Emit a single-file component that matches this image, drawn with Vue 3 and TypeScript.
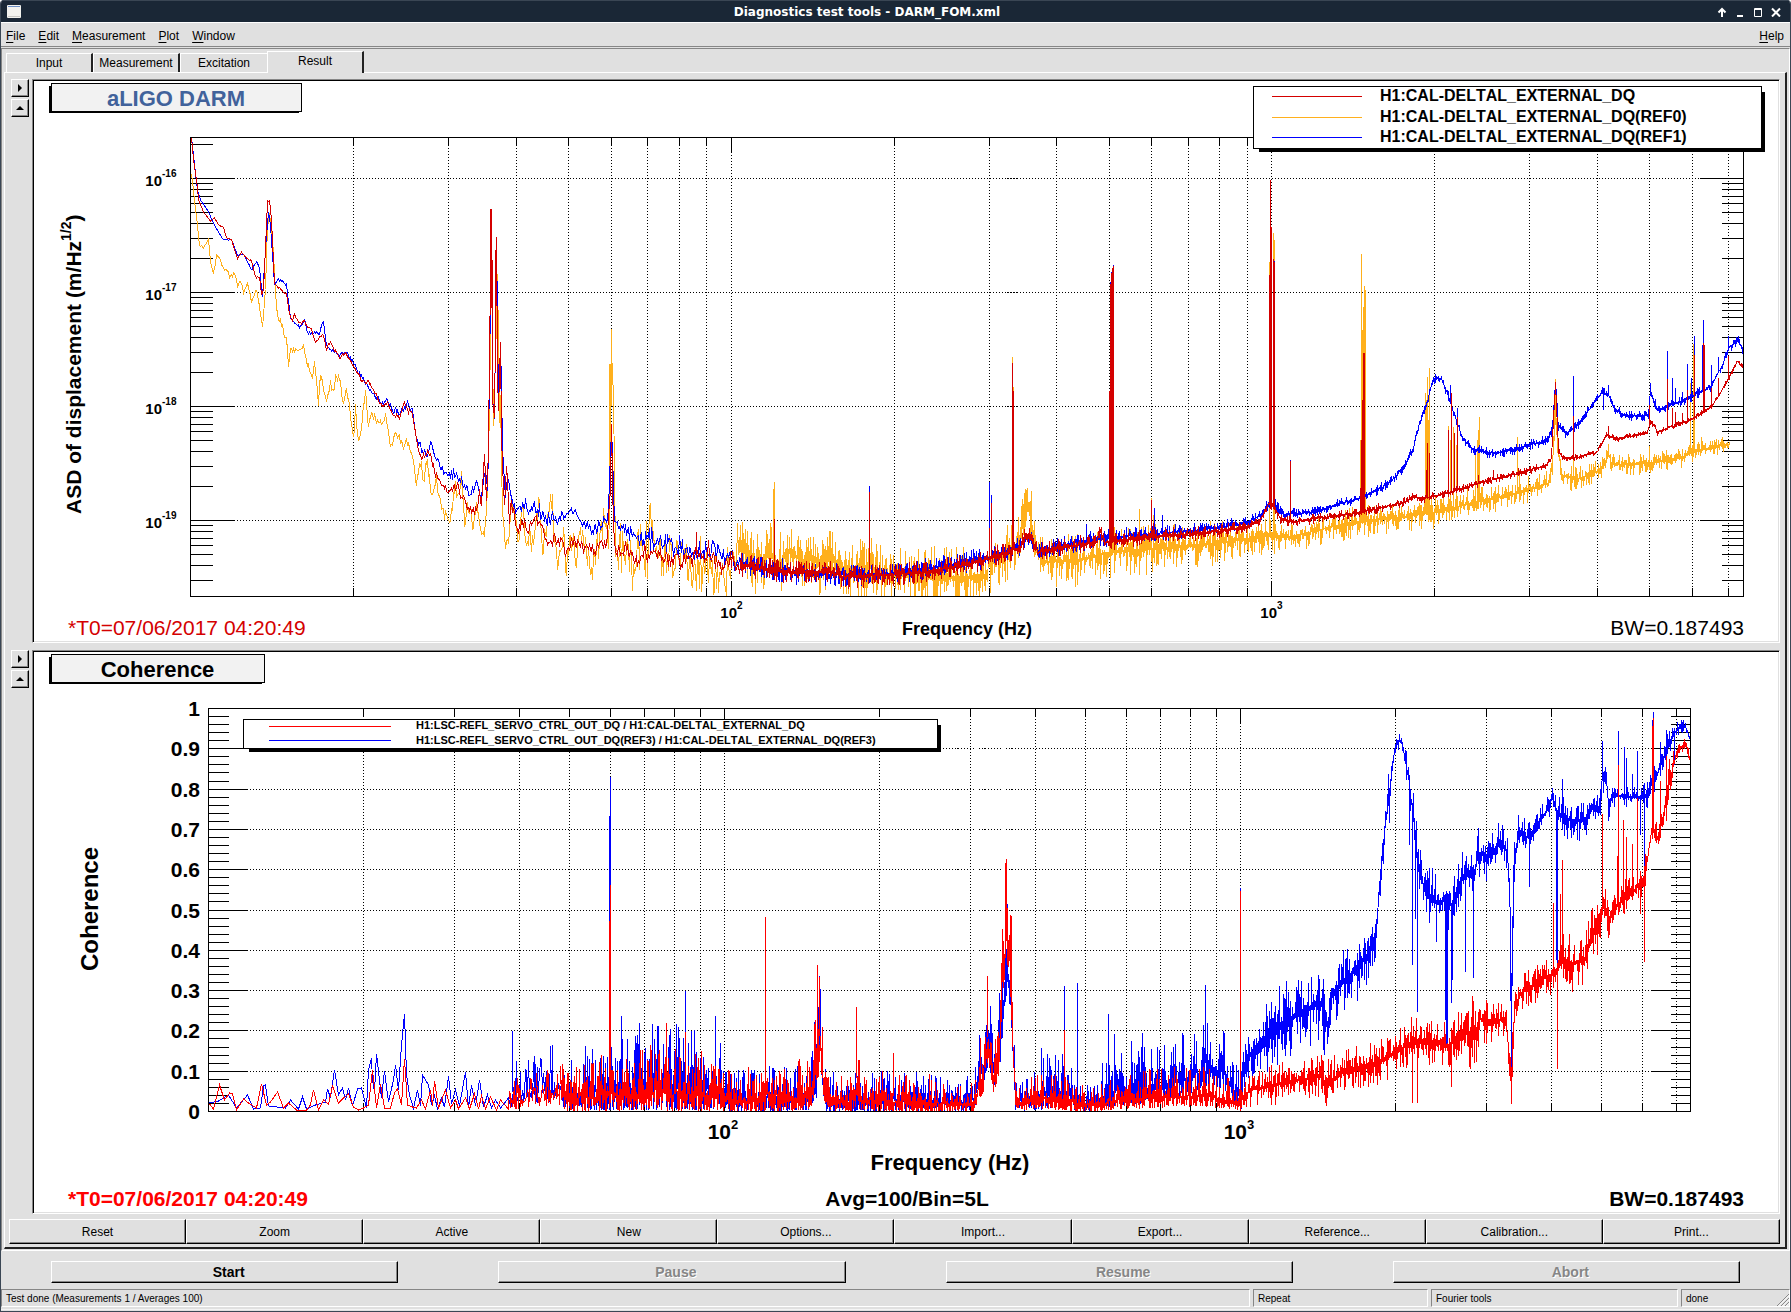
<script setup lang="ts">
type Knot = number[]

interface Axis { text: string; exp?: string; x: number; y: number; anchor: string }
interface Plot {
  id: string
  origin: number
  title: string
  titleWidth: number
  titleColor: string
  frame: { l: number; t: number; r: number; b: number }
  grid: string
  ticks: string
  traces: { color: string; d: string }[]
  labels: Axis[]
  labelClass: string
  small: number
  expRise: number
  legend: { x: number; y: number; w: number; h: number; x1: number; x2: number; tx: number; cls: string; rows: { color: string; text: string; ly: number; ty: number }[] }
}

const RED = '#d40000'
const ORANGE = '#ffb01c'
const BLUE = '#0000ff'

const parse = (s: string): Knot[] => s.trim().split(/\s+/).map(p => p.split(',').map(Number))

function random(seed: number) {
  let a = seed
  return () => {
    a = (a + 0x6d2b79f5) | 0
    let t = Math.imul(a ^ (a >>> 15), 1 | a)
    t = (t + Math.imul(t ^ (t >>> 7), 61 | t)) ^ t
    return ((t ^ (t >>> 14)) >>> 0) / 4294967296
  }
}

function at(k: Knot[], x: number, i = 1): number {
  if (x <= k[0][0]) return k[0][i]
  for (let n = 1; n < k.length; n++) {
    if (x <= k[n][0]) {
      const f = (x - k[n - 1][0]) / (k[n][0] - k[n - 1][0])
      return k[n - 1][i] + (k[n][i] - k[n - 1][i]) * f
    }
  }
  return k[k.length - 1][i]
}

const spikePath = (spikes: Knot[], base: (x: number) => number) =>
  spikes.map(([x, y]) => `M${Math.floor(x) + 0.5},${y}V${base(x).toFixed(0)}`).join('')

/* Spectrum: a mean curve with symmetric noise, plus narrow lines */
function spectrum(curve: string, noise: string, spikes: string, seed: number) {
  const c = parse(curve)
  const n = parse(noise)
  const rnd = random(seed)
  const pts: string[] = []
  const end = c[c.length - 1][0]
  const put = (x: number, y: number) => pts.push(`${x + 0.5},${Math.min(596, Math.max(137, y)).toFixed(1)}`)
  for (let x = c[0][0]; x <= end; x++) {
    const a = at(n, x)
    const y = at(c, x)
    if (x < 620) put(x, y + (rnd() + rnd() - 1) * a)
    else if (x < 740) put(x, y + (rnd() + rnd() - 1) * a * 1.7)
    else {
      const p = rnd()
      const q = rnd()
      put(x, y - a * (0.05 + p * p * 1.35))
      put(x, y + a * (0.05 + q * q * 1.35))
    }
  }
  return 'M' + pts.join('L') + spikePath(parse(spikes), x => at(c, x))
}

/* Coherence: sparse curve first, then columns between a low and a high envelope */
function coherence(curve: string, envelope: string, spikes: string, seed: number) {
  const c = parse(curve)
  const e = parse(envelope)
  const rnd = random(seed)
  const pts = c.map(([x, y]) => `${x + 0.5},${y}`)
  const put = (x: number, y: number) => pts.push(`${x + 0.5},${Math.min(1111, y).toFixed(1)}`)
  for (let x = c[c.length - 1][0] + 1; x <= 1690; x++) {
    const lo = at(e, x)
    const span = lo - at(e, x, 2)
    const p = rnd()
    const q = rnd()
    if (x < 1240) {
      put(x, lo - span * (0.3 + p * p * 1.1))
      if (x > 560 || q > 0.5) put(x, lo - span * 0.45 * q * q + 2)
    } else {
      put(x, lo - span * (0.55 + p * p * 0.95))
      put(x, lo - span * (0.45 - q * q * 0.95))
    }
  }
  return 'M' + pts.join('L') + spikePath(parse(spikes), x => (at(e, x) + at(e, x, 2)) / 2)
}

const asdRed = spectrum(
  `191,137 193,160 197,187 198,200 203,212 210,221 214,218 218,225 223,227 226,238 231,239 234,250 237,259 241,252 246,258 251,261 255,277 259,277 261,295 263,290 265,247 267,202 269,201 271,220 274,283 277,287 282,291 286,295 289,313 292,322 294,314 298,322 304,322 308,328 311,330 315,342 323,335 326,349 330,342 339,358 346,353 353,367 362,382 367,381 374,393 381,407 387,402 392,415 399,417 404,405 412,415 416,443 421,458 430,453 434,472 440,482 448,493 456,487 462,498 468,509 476,512 479,493 481,510 484,452 486,503 488,453 489,353 491,209 492,400 494,417 496,235 497,380 498,410 500,340 501,437 504,510 506,467 509,520 511,503 517,532 524,520 528,533 534,517 540,520 546,542 559,540 566,550 574,540 582,550 591,550 600,545 606,547 608,517 610,487 611,430 613,527 615,550 627,550 638,558 650,550 669,560 696,558 711,553 722,565 742,565 768,570 791,572 830,572 845,577 887,575 925,572 964,565 990,558 1013,550 1020,548 1026,533 1038,552 1059,548 1097,542 1100,530 1104,543 1136,538 1200,533 1245,528 1260,520 1269,502 1275,510 1281,520 1294,522 1317,518 1359,513 1371,510 1405,502 1413,496 1421,499 1451,492 1478,483 1520,473 1547,465 1551,457 1555,383 1558,450 1562,458 1574,458 1597,452 1606,435 1616,439 1646,433 1650,423 1654,425 1657,433 1669,427 1685,422 1702,413 1710,407 1717,398 1729,377 1737,361 1743,368`,
  '191,0 300,2 400,4 500,8 600,10 620,7 760,9 960,8 1240,5 1300,4 1743,2',
  `490,209 491,211 492,260 495,250 496,235 611,428 696,532 774,519 869,492 989,528 991,503 1012,363 1013,391 1109,391 1110,284 1111,273 1112,268 1113,266 1151,500 1153,523 1269,275 1270,180 1271,227 1273,259 1274,262 1290,461 1360,488 1361,440 1362,400 1363,353 1364,353 1426,470 1427,443 1429,453 1448,430 1451,393 1454,433 1457,417 1478,475 1493,470 1518,468 1573,416 1608,426 1649,405 1667,379 1672,408 1675,412 1682,413 1687,390 1694,355 1703,343 1704,345 1711,388 1718,378 1728,356`, 11)

const asdBlue = spectrum(
  `191,137 194,165 197,190 200,200 207,210 214,225 222,239 231,240 237,255 243,254 251,270 256,262 259,268 262,297 265,250 268,211 270,225 274,284 278,279 286,285 290,318 294,323 299,327 304,321 307,332 312,333 319,333 323,321 326,347 339,355 346,353 353,363 367,386 381,404 387,400 392,408 399,413 406,404 412,411 416,440 421,450 428,453 430,441 434,455 441,470 448,477 455,473 462,483 468,495 476,485 481,495 485,472 487,490 488,453 491,214 492,400 494,415 496,240 498,400 500,345 502,440 505,500 507,480 511,500 516,512 520,505 530,507 540,512 550,518 560,520 567,512 575,513 582,525 600,527 608,510 611,425 614,520 620,530 640,538 670,545 690,550 715,550 730,560 760,568 800,573 845,575 900,573 964,563 990,557 1013,548 1020,546 1026,535 1038,551 1059,546 1097,539 1136,535 1200,530 1245,523 1260,516 1269,502 1275,505 1283,515 1317,511 1359,498 1375,491 1390,482 1405,465 1413,447 1420,421 1427,402 1431,385 1436,377 1441,379 1447,393 1454,415 1462,438 1471,448 1486,453 1505,452 1525,446 1547,440 1552,430 1555,382 1558,427 1566,433 1575,427 1590,408 1602,392 1608,395 1613,407 1622,415 1640,416 1648,415 1650,390 1653,400 1657,410 1680,402 1696,394 1710,387 1722,365 1729,347 1738,341 1743,350`,
  '191,0 300,2 400,5 500,9 600,10 620,8 760,9 960,8 1240,5 1300,4 1743,4',
  `869,486 989,482 991,495 973,549 1086,524 1110,282 1111,272 1112,270 1113,265 1151,503 1154,508 1162,515 1274,261 1290,460 1450,385 1457,408 1573,376 1603,410 1608,385 1650,383 1667,351 1672,378 1675,388 1682,392 1687,364 1691,378 1694,336 1702,345 1703,320 1711,365 1718,357 1728,336`, 23)

const asdOrange = spectrum(
  `191,173 194,200 197,225 199,245 203,248 208,239 210,262 213,274 216,256 219,257 223,270 226,268 229,277 234,275 237,284 241,283 243,293 247,283 251,304 256,290 262,325 265,290 267,225 269,215 272,240 276,305 278,322 280,318 283,333 286,337 288,365 291,348 297,350 303,347 306,362 312,380 314,360 318,405 320,375 326,402 330,385 334,392 335,376 340,382 343,405 346,388 351,420 353,441 355,408 358,440 361,425 365,390 368,425 371,410 375,420 380,424 386,418 390,445 396,434 401,438 404,452 407,442 412,453 416,483 420,460 423,480 426,460 431,493 436,478 440,505 449,520 455,485 458,500 461,480 464,520 468,505 472,530 476,500 483,545 486,510 488,450 489,395 491,255 493,430 497,270 499,430 500,400 502,520 505,548 509,530 511,500 514,520 519,548 522,495 525,535 533,545 538,497 541,540 546,530 550,490 554,540 557,565 563,540 566,565 571,535 575,565 580,530 585,545 591,570 597,540 600,540 605,515 608,545 610,470 611,360 613,400 615,560 620,545 629,565 640,550 647,545 649,515 652,545 656,560 665,555 690,560 700,570 711,568 723,575 735,565 742,540 748,560 760,565 768,550 778,565 791,550 800,562 812,558 820,565 832,555 840,568 870,566 885,575 900,575 920,578 960,578 985,575 990,562 1005,552 1018,545 1022,520 1025,508 1030,512 1035,550 1045,562 1080,560 1110,552 1140,550 1200,545 1240,540 1265,535 1290,537 1330,527 1359,522 1400,517 1440,512 1470,503 1510,495 1548,483 1552,465 1555,410 1558,455 1562,475 1575,480 1597,472 1605,462 1608,455 1612,465 1646,463 1680,458 1700,450 1729,444`,
  '191,2 400,8 500,16 600,26 620,20 740,22 860,23 960,23 1050,20 1200,17 1300,12 1460,11 1600,9 1690,7 1729,6',
  `609,364 610,364 611,329 612,380 649,505 774,482 773,489 791,529 813,537 832,532 864,543 989,496 1012,357 1013,387 1022,499 1024,493 1028,502 1112,483 1139,509 1151,498 1153,515 1269,262 1273,233 1274,240 1360,440 1361,254 1362,330 1363,307 1364,286 1365,290 1425,393 1426,400 1427,377 1428,420 1429,368 1448,426 1450,440 1453,427 1456,445 1475,453 1477,440 1479,417 1478,430 1517,437 1519,470 1554,390 1555,379 1573,450 1606,450 1649,446 1690,383 1693,344 1694,350 1701,437`, 37)

const cohBlue = coherence(
  `209,1103 218,1101 228,1095 236,1108 247,1095 253,1109 260,1108 263,1086 265,1085 268,1106 285,1108 290,1100 298,1109 302,1097 306,1109 315,1105 325,1102 327,1089 330,1098 334,1070 338,1095 342,1088 345,1100 348,1088 352,1106 357,1089 361,1088 366,1108 368,1070 371,1058 372,1080 374,1092 376,1054 379,1080 381,1098 384,1071 388,1102 393,1080 395,1065 398,1090 401,1045 404,1014 406,1075 409,1095 413,1108 417,1090 420,1106 422,1075 428,1085 431,1105 434,1096 437,1109 441,1098 444,1107 448,1076 451,1104 455,1090 459,1106 465,1072 468,1108 471,1085 475,1106 479,1080 483,1107 487,1095 491,1108 495,1100 500,1108 508,1098`,
  `508,1109,1090 512,1108,1075 560,1107,1060 600,1108,1066 640,1108,1045 670,1108,1046 720,1108,1055 735,1109,1078 780,1109,1078 810,1108,1070 816,1100,1030 820,1060,990 823,1108,1060 826,1109,1080 870,1109,1080 900,1109,1080 960,1109,1088 973,1108,1080 983,1085,1025 986,1070,1015 995,1085,1030 1000,1060,985 1005,1000,925 1007,990,915 1010,1010,935 1015,1108,1085 1030,1109,1085 1045,1107,1064 1060,1105,1065 1076,1108,1085 1090,1109,1092 1105,1105,1070 1130,1103,1065 1160,1100,1058 1185,1093,1046 1200,1088,1042 1215,1083,1034 1230,1095,1058 1240,1108,1080 1245,1075,1045 1258,1065,1030 1275,1050,1008 1300,1032,992 1320,1022,984 1326,1040,990 1328,1065,1000 1331,1010,980 1350,992,958 1370,970,932 1374,958,925 1377,935,905 1379,905,878 1381,880,855 1384,845,825 1387,820,795 1390,795,770 1393,761,750 1398,746,736 1402,748,738 1405,768,752 1409,795,775 1413,835,805 1417,870,840 1423,902,872 1428,912,878 1436,918,888 1444,915,885 1451,920,890 1459,898,868 1467,888,862 1474,885,858 1478,868,840 1491,870,843 1499,857,832 1506,862,838 1509,900,860 1511,1060,1000 1513,900,860 1515,860,842 1518,840,822 1526,848,828 1536,833,820 1545,819,805 1552,804,793 1555,818,802 1560,827,805 1574,832,812 1583,830,810 1593,817,799 1600,816,797 1602,788,770 1606,786,774 1608,814,800 1612,801,790 1631,803,791 1641,803,791 1646,803,788 1652,790,776 1657,780,766 1666,760,746 1671,744,732 1679,729,722 1685,730,723 1690,743,737`,
  `609,816 610,777 621,1016 685,991 715,1016 819,976 1064,986 1077,983 1108,1014 1114,1034 1131,1041 1142,1033 1151,1049 1041,1048 1205,985 1240,888 1602,741 1618,731 1624,747 1626,758 1632,774 1637,751 1562,779 1653,712 1652,720 1660,742 1666,730 1667,734 1389,823 1409,845 1412,965 1415,919 1417,1012 1436,942 1445,1020 1446,1045 1447,1045 1451,1003 1452,980 1465,972 1473,978 1511,1070 1529,887 1556,960 1557,978 1640,835 1644,875 1674,765 512,1031`, 53)

const cohRed = coherence(
  `209,1104 213,1109 219,1085 224,1100 229,1093 232,1094 236,1110 243,1099 248,1103 256,1108 261,1084 266,1105 270,1102 277,1092 283,1108 288,1103 296,1110 306,1110 310,1105 313,1090 318,1110 323,1100 328,1104 332,1086 338,1103 343,1098 348,1094 353,1107 358,1110 363,1108 368,1105 372,1070 376,1108 380,1084 384,1108 390,1108 394,1093 397,1089 401,1105 404,1059 407,1105 412,1107 416,1108 421,1100 425,1109 430,1090 432,1106 434,1081 438,1108 445,1090 450,1108 455,1100 458,1109 465,1098 469,1109 474,1094 478,1109 481,1096 485,1109 490,1097 496,1110 500,1100 508,1109`,
  `508,1110,1090 540,1109,1075 600,1109,1070 640,1108,1062 680,1109,1062 720,1109,1068 735,1110,1088 768,1109,1065 790,1109,1078 810,1107,1065 816,1090,1020 820,1060,1000 824,1108,1080 850,1110,1086 856,1106,1050 862,1108,1080 900,1110,1084 960,1110,1092 973,1109,1088 983,1090,1040 988,1060,1000 993,1090,1050 998,1080,1020 1002,1000,920 1006,960,880 1009,970,895 1011,1020,940 1015,1109,1093 1040,1107,1078 1060,1108,1080 1090,1110,1094 1120,1107,1084 1160,1106,1078 1200,1104,1076 1240,1108,1090 1250,1099,1081 1290,1093,1070 1320,1088,1065 1327,1100,1072 1345,1082,1058 1375,1078,1052 1390,1067,1044 1410,1056,1030 1440,1052,1030 1448,1062,1032 1460,1048,1018 1475,1055,1012 1480,1032,1005 1490,1038,1010 1500,1030,1010 1506,1036,1015 1511,1095,1065 1514,1020,1000 1519,1005,985 1540,990,968 1555,984,962 1562,978,945 1574,978,950 1585,972,945 1592,948,920 1599,938,908 1603,912,886 1608,936,916 1612,918,903 1623,910,890 1633,902,882 1643,892,866 1648,865,843 1652,835,815 1657,845,830 1664,822,804 1669,795,770 1675,766,750 1679,752,744 1685,746,740 1688,758,750 1690,768,760`,
  `609,921 610,885 666,1023 685,1032 765,917 817,965 819,977 856,1007 893,1053 929,1074 987,976 1005,863 1006,881 1064,1030 1240,891 1553,903 1560,894 1562,860 1602,814 1618,765 1617,856 1623,820 1626,837 1632,844 1637,798 1652,726 1653,718 1660,781 1666,756 1412,1103 1417,1103 1451,1087 1557,1069 1644,962 1640,914 1511,1101 1326,1106`, 71)

const line = (x1: number, y1: number, x2: number, y2: number) =>
  `M${x1.toFixed(1)},${y1.toFixed(1)}L${x2.toFixed(1)},${y2.toFixed(1)}`

/* Log frequency axis shared by both plots: 20…90, 100…900, 1000…7000 Hz */
function verticals(l: number, t: number, b: number, decade: number) {
  let grid = ''
  let ticks = ''
  for (let p = 1; p <= 3; p++) {
    for (let m = 1; m <= 9; m++) {
      if ((p === 1 && m === 1) || (p === 3 && m > 7)) continue
      const x = Math.floor(l + decade * (p - 1 + Math.log10(m))) + 0.5
      const len = m === 1 ? 15 : 8
      ticks += line(x, t, x, t + len) + line(x, b - len - 1, x, b)
      grid += line(x, t + len + 2, x, b - len - 1)
    }
  }
  return { grid, ticks }
}

const f1 = { l: 190.5, t: 137.5, r: 1743.5, b: 596.5 }
const f2 = { l: 208.5, t: 708.5, r: 1690.5, b: 1111.5 }
const v1 = verticals(191.2, f1.t, f1.b, 540.3)
const v2 = verticals(208.6, f2.t, f2.b, 516)

for (let p = 0; p < 5; p++) {
  for (let m = 1; m <= 9; m++) {
    const y = Math.floor(178.5 + 114 * (p - Math.log10(m))) + 0.5
    if (y < f1.t || y > f1.b) continue
    const len = m === 1 ? 44 : 22
    v1.ticks += line(f1.l, y, f1.l + len, y) + line(f1.r - len, y, f1.r, y)
    if (m === 1) v1.grid += line(f1.l + len + 2, y, f1.r - len, y)
  }
}
for (let n = 1; n < 50; n++) {
  const y = Math.floor(1111.5 - n * 8.06) + 0.5
  const major = n % 5 === 0
  const len = major ? 39 : 20
  v2.ticks += line(f2.l, y, f2.l + len, y) + line(f2.r - len, y, f2.r, y)
  if (major) v2.grid += line(f2.l + len + 2, y, f2.r - len, y)
}

const plots: Plot[] = [
  {
    id: 'asd', origin: 81, title: 'aLIGO DARM', titleWidth: 250, titleColor: '#41629b', frame: f1, ...v1,
    traces: [{ color: ORANGE, d: asdOrange }, { color: BLUE, d: asdBlue }, { color: RED, d: asdRed }],
    labels: [
      ...[16, 17, 18, 19].map((e, i) => ({ text: '10', exp: `-${e}`, x: 162, y: 186 + i * 114, anchor: 'end' })),
      { text: '10', exp: '2', x: 737, y: 618, anchor: 'end' },
      { text: '10', exp: '3', x: 1277, y: 618, anchor: 'end' },
    ],
    labelClass: 't15', small: 10, expRise: 9,
    legend: {
      x: 1253, y: 86, w: 508, h: 62, x1: 1272, x2: 1362, tx: 1380, cls: 't16',
      rows: [
        { color: RED, text: 'H1:CAL-DELTAL_EXTERNAL_DQ', ly: 96, ty: 101 },
        { color: ORANGE, text: 'H1:CAL-DELTAL_EXTERNAL_DQ(REF0)', ly: 117, ty: 122 },
        { color: BLUE, text: 'H1:CAL-DELTAL_EXTERNAL_DQ(REF1)', ly: 137, ty: 142 },
      ],
    },
  },
  {
    id: 'coherence', origin: 652, title: 'Coherence', titleWidth: 213, titleColor: '#000', frame: f2, ...v2,
    traces: [{ color: BLUE, d: cohBlue }, { color: '#ff0000', d: cohRed }],
    labels: [
      ...['1', '0.9', '0.8', '0.7', '0.6', '0.5', '0.4', '0.3', '0.2', '0.1', '0'].map((text, i) => ({
        text, x: 200, y: Math.round(716 + i * 40.3), anchor: 'end',
      })),
      { text: '10', exp: '2', x: 731, y: 1139, anchor: 'end' },
      { text: '10', exp: '3', x: 1247, y: 1139, anchor: 'end' },
    ],
    labelClass: 't21', small: 13, expRise: 10,
    legend: {
      x: 243, y: 719, w: 694, h: 29, x1: 269, x2: 391, tx: 416, cls: 't11',
      rows: [
        { color: '#ff0000', text: 'H1:LSC-REFL_SERVO_CTRL_OUT_DQ / H1:CAL-DELTAL_EXTERNAL_DQ', ly: 726, ty: 729 },
        { color: BLUE, text: 'H1:LSC-REFL_SERVO_CTRL_OUT_DQ(REF3) / H1:CAL-DELTAL_EXTERNAL_DQ(REF3)', ly: 740, ty: 744 },
      ],
    },
  },
]

const menus = ['File', 'Edit', 'Measurement', 'Plot', 'Window']
const tabs = ['Input', 'Measurement', 'Excitation', 'Result']
const tools = ['Reset', 'Zoom', 'Active', 'New', 'Options...', 'Import...', 'Export...', 'Reference...', 'Calibration...', 'Print...']
const actions = ['Start', 'Pause', 'Resume', 'Abort']
</script>

<template>
  <div class="window">
    <header class="titlebar">
      <svg class="app-icon" viewBox="0 0 14 13" aria-hidden="true">
        <rect width="14" height="13" rx="1" fill="#f2f2ee" />
        <rect x="1" y="1" width="12" height="1" fill="#6d8fc4" />
        <rect x="1" y="11" width="12" height="1" fill="#c8c8c4" />
      </svg>
      <h1>Diagnostics test tools - DARM_FOM.xml</h1>
      <div class="controls">
        <button type="button" aria-label="Shade"><svg viewBox="0 0 10 10"><path d="M5 10V2M1.5 5.5L5 2L8.5 5.5" /></svg></button>
        <button type="button" aria-label="Minimize"><svg viewBox="0 0 10 10"><path d="M2 9H8" /></svg></button>
        <button type="button" aria-label="Maximize"><svg viewBox="0 0 10 10"><path class="box" d="M1.5 1.5H8.500V9.500H1.500ZM1 2.500H9" /></svg></button>
        <button type="button" aria-label="Close"><svg viewBox="0 0 10 10"><path d="M1 1.500L9 9.500M9 1.500L1 9.500" /></svg></button>
      </div>
    </header>

    <nav class="menubar">
      <button v-for="m in menus" :key="m" type="button"><u>{{ m[0] }}</u>{{ m.slice(1) }}</button>
      <button type="button" class="help"><u>H</u>elp</button>
    </nav>

    <main class="body">
      <div class="tabs" role="tablist">
        <button v-for="t in tabs" :key="t" type="button" role="tab" :aria-selected="t === 'Result'" :class="{ active: t === 'Result' }">{{ t }}</button>
      </div>
      <section class="pane">
        <div v-for="p in plots" :key="p.id" class="row">
          <div class="side">
            <button type="button" aria-label="Expand right"><svg viewBox="0 0 8 8"><path d="M2 0L6 4L2 8Z" /></svg></button>
            <button type="button" aria-label="Expand up"><svg viewBox="0 0 8 8"><path d="M0 6L4 2L8 6Z" /></svg></button>
          </div>
          <div class="canvas">
            <svg :viewBox="`34 ${p.origin} 1744 560`" role="img" :aria-label="p.title">
              <rect x="49" :y="p.origin + 5" :width="p.titleWidth" height="27" fill="#000" />
              <rect class="box" x="51.5" :y="p.origin + 2.5" :width="p.titleWidth" height="28" fill="#f2f2f2" />
              <text class="t22 mid" :x="51 + p.titleWidth / 2" :y="p.origin + 25" :fill="p.titleColor">{{ p.title }}</text>

              <path class="grid" :d="p.grid" />
              <path class="rule" :d="p.ticks" />
              <path v-for="t in p.traces" :key="t.color" class="trace" :d="t.d" :stroke="t.color" />
              <rect class="box" :x="p.frame.l" :y="p.frame.t" :width="p.frame.r - p.frame.l" :height="p.frame.b - p.frame.t" fill="none" />

              <template v-for="(a, i) in p.labels" :key="i">
                <text :class="p.labelClass" :x="a.x" :y="a.y" :text-anchor="a.anchor">{{ a.text }}</text>
                <text v-if="a.exp" :class="'t' + p.small" :x="a.x" :y="a.y - p.expRise">{{ a.exp }}</text>
              </template>

              <rect :x="p.legend.x + 6" :y="p.legend.y + 6" :width="p.legend.w - 2" :height="p.legend.h - 2" fill="#000" />
              <rect class="box" :x="p.legend.x + 0.5" :y="p.legend.y + 0.5" :width="p.legend.w" :height="p.legend.h" fill="#fff" />
              <template v-for="r in p.legend.rows" :key="r.text">
                <path class="trace" :d="`M${p.legend.x1},${r.ly + 0.5}H${p.legend.x2}`" :stroke="r.color" />
                <text :class="p.legend.cls" :x="p.legend.tx" :y="r.ty">{{ r.text }}</text>
              </template>

              <template v-if="p.id === 'asd'">
                <text class="t21" transform="translate(81 514) rotate(-90)">ASD of displacement (m/Hz<tspan class="t14" dy="-10">1/2</tspan><tspan dy="10">)</tspan></text>
                <text class="t18 mid" x="967" y="635">Frequency (Hz)</text>
                <text class="t21 plain" x="68" y="635" :fill="RED">*T0=07/06/2017 04:20:49</text>
                <text class="t21 plain end" x="1744" y="635">BW=0.187493</text>
              </template>
              <template v-else>
                <text class="t24" transform="translate(98 971) rotate(-90)">Coherence</text>
                <text class="t22 mid" x="950" y="1170">Frequency (Hz)</text>
                <text class="t21" x="68" y="1206" fill="#ff0000">*T0=07/06/2017 04:20:49</text>
                <text class="t21 mid" x="907" y="1206">Avg=100/Bin=5L</text>
                <text class="t21 end" x="1744" y="1206">BW=0.187493</text>
              </template>
            </svg>
          </div>
        </div>
        <div class="toolbar">
          <button v-for="t in tools" :key="t" type="button">{{ t }}</button>
        </div>
      </section>
    </main>

    <div class="actions">
      <button v-for="a in actions" :key="a" type="button" :disabled="a !== 'Start'">{{ a }}</button>
    </div>

    <footer class="status">
      <span>Test done (Measurements 1 / Averages 100)</span>
      <span>Repeat</span>
      <span>Fourier tools</span>
      <span class="last">done
        <svg class="grip" viewBox="0 0 12 12" aria-hidden="true"><path d="M0 12L12 0M4 12L12 4M8 12L12 8" stroke="#888" /><path d="M1 12.500L12.500 1M5 12.500L12.500 5M9 12.500L12.500 9" stroke="#fff" /></svg>
      </span>
    </footer>
  </div>
</template>

<style>
body {
  margin: 0;
  background: #fff;
}
</style>

<style scoped>
.window {
  box-sizing: border-box;
  min-height: 100vh;
  display: flex;
  flex-direction: column;
  background: #e0e0e0;
  border: solid #3a4654;
  border-width: 0 1px 1px;
  border-radius: 4px 4px 0 0;
  overflow: hidden;
  font: 12px/14px "Liberation Sans", Arial, sans-serif;
  color: #000;
}
button {
  font: inherit;
  color: inherit;
  padding: 0;
  margin: 0;
  border: 0;
  border-radius: 0;
  background: none;
}
.titlebar {
  display: flex;
  align-items: center;
  height: 22px;
  box-sizing: border-box;
  padding: 0 9px 0 6px;
  background: #1a2736;
  border-top: 1px solid #3a4654;
}
.app-icon {
  width: 14px;
  height: 13px;
}
h1 {
  flex: 1;
  margin: 0;
  padding-right: 4px;
  text-align: center;
  font: bold 12px/20px "DejaVu Sans", sans-serif;
  color: #fff;
}
.controls {
  display: flex;
  gap: 8px;
}
.controls button {
  width: 10px;
  height: 10px;
}
.controls svg {
  display: block;
  width: 10px;
  height: 10px;
  fill: none;
  stroke: #fff;
  stroke-width: 2;
}
.controls .box {
  stroke-width: 1;
}
.menubar {
  display: flex;
  align-items: center;
  gap: 13px;
  height: 25px;
  box-sizing: border-box;
  padding: 2px 6px 0 5px;
  border-top: 1px solid #fff;
  border-bottom: 1px solid #868686;
}
.menubar u {
  text-underline-offset: 2px;
}
.help {
  margin-left: auto;
}
.body {
  margin-top: 1px;
  padding: 2px 2px 1px;
  border: solid;
  border-width: 1px;
  border-color: #868686 #fff #fff #868686;
}
.tabs {
  display: flex;
  align-items: flex-end;
  padding-left: 2px;
}
.tabs button {
  box-sizing: border-box;
  width: 87px;
  height: 19px;
  padding-bottom: 1px;
  border: solid;
  border-width: 1px 2px 0 1px;
  border-color: #fff #222 #fff #fff;
}
.tabs button:nth-child(3) {
  border-right-width: 0;
}
.tabs .active {
  width: 97px;
  height: 22px;
  margin-bottom: -1px;
  padding-bottom: 3px;
  background: #e0e0e0;
}
.pane {
  padding: 6px 5px 3px 4px;
  border-style: solid;
  border-width: 1px 2px 2px 1px;
  border-color: #fff #222 #222 #fff;
}
.row {
  display: flex;
  gap: 3px;
  margin-bottom: 7px;
}
.row:nth-of-type(2) {
  margin-bottom: 5px;
}
.side {
  display: flex;
  flex-direction: column;
  gap: 2px;
  width: 18px;
  margin-left: 2px;
}
.side button {
  display: grid;
  place-items: center;
  height: 18px;
}
.side svg {
  width: 8px;
  height: 8px;
}
.side button,
.toolbar button,
.actions button {
  box-sizing: border-box;
  border: 1px solid;
  border-color: #fff #000 #000 #fff;
  box-shadow: inset -1px -1px #868686;
}
.canvas {
  flex: 1;
  min-width: 0;
  box-sizing: border-box;
  background: #fff;
  border: 1px solid;
  border-color: #868686 #fff #fff #868686;
  box-shadow: inset 1px 1px #000, inset -1px -1px #e0e0e0;
}
.canvas svg {
  display: block;
  width: calc(100% - 2px);
  margin: 1px;
}
.canvas text {
  font-family: "Liberation Sans", Arial, sans-serif;
  font-weight: bold;
  font-kerning: none;
}
.canvas .plain {
  font-weight: normal;
}
.mid {
  text-anchor: middle;
}
.end {
  text-anchor: end;
}
.t10 { font-size: 10px; }
.t11 { font-size: 11px; }
.t13 { font-size: 13px; }
.t14 { font-size: 14px; }
.t15 { font-size: 15px; }
.t16 { font-size: 16px; }
.t18 { font-size: 18px; }
.t21 { font-size: 21px; }
.t22 { font-size: 22px; }
.t24 { font-size: 24px; }
.grid,
.rule,
.trace {
  fill: none;
  shape-rendering: crispEdges;
}
.grid,
.rule {
  stroke: #000;
}
.grid {
  stroke-dasharray: 1 2;
}
.canvas .box {
  stroke: #000;
  shape-rendering: crispEdges;
}
.toolbar {
  display: flex;
}
.toolbar button {
  flex: 1;
  height: 25px;
}
.actions {
  display: flex;
  gap: 100px;
  padding: 10px 50px 6px;
}
.actions button {
  flex: 1;
  height: 22px;
  padding-left: 8px;
  font: bold 14px/16px "Liberation Sans", Arial, sans-serif;
}
.actions button:disabled {
  color: #868686;
  text-shadow: 1px 1px #fff;
}
.status {
  display: grid;
  grid-template-columns: 1fr 175px 247px 109px;
  gap: 3px;
  padding-bottom: 2px;
  border-bottom: 1px solid #f4f4f4;
  font-size: 10px;
}
.status span {
  box-sizing: border-box;
  height: 18px;
  padding: 0 4px;
  line-height: 17px;
  border: 1px solid;
  border-color: #868686 #fff #fff #868686;
}
.status .last {
  position: relative;
}
.grip {
  position: absolute;
  right: 0;
  bottom: 0;
  width: 12px;
  height: 12px;
}
</style>
